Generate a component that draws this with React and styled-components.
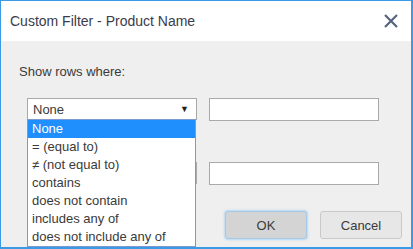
import React from 'react'
import styled, { createGlobalStyle } from 'styled-components'

const Global = createGlobalStyle`
  html, body { margin:0; padding:0; background:#ffffff; }
  body { font-family:"Liberation Sans", Arial, sans-serif; }
`
const Dialog = styled.div`
  width:413px;
  height:249px;
  box-sizing:border-box;
  border-style:solid;
  border-color:#3a9ae6;
  border-width:1px 2px 2px 1px;
  background:#efefef;
  display:flex;
  flex-direction:column;
  color:#3a3a3a;
`
const Header = styled.div`
  height:39px;
  background:#ffffff;
  display:flex;
  align-items:center;
  justify-content:space-between;
  padding:0 12px 1px 9px;
`
const Title = styled.div`
  font-size:14px;
  color:#3b3b4a;
`
const Close = styled.div`
  width:16px;
  height:16px;
  display:flex;
  svg { display:block; }
`
const Body = styled.div`
  flex:1;
  position:relative;
  padding:23px 0 0 18px;
`
const Label = styled.div`
  font-size:13px;
  line-height:16px;
`
const Row = styled.div`
  display:flex;
  align-items:flex-start;
  gap:12px;
  margin:${p => p.top}px 0 0 8px;
`
const Select = styled.div`
  position:relative;
  width:170px;
  height:22px;
  box-sizing:border-box;
  border:1px solid #a9a9a9;
  background:#ffffff;
  font-size:13px;
  display:flex;
  align-items:center;
  padding:0 0 0 5px;
`
const Arrow = styled.span`
  position:absolute;
  right:7px;
  top:5px;
  font-size:9px;
  color:#222;
`
const Input = styled.div`
  width:170px;
  height:23px;
  box-sizing:border-box;
  border:1px solid #a9a9a9;
  background:#ffffff;
`
const List = styled.ul`
  position:absolute;
  left:-1px;
  top:20px;
  width:169px;
  margin:0;
  padding:0;
  list-style:none;
  box-sizing:border-box;
  border:1px solid #7d9ad0;
  background:#ffffff;
  z-index:2;
`
const Item = styled.li`
  height:18px;
  line-height:18px;
  padding-left:4px;
  font-size:13px;
  color:${p => p.active ? '#ffffff' : '#3a3a3a'};
  background:${p => p.active ? '#1e8ffd' : 'transparent'};
`
const Footer = styled.div`
  display:flex;
  justify-content:flex-end;
  gap:13px;
  padding:26px 9px 0 0;
`
const Button = styled.button`
  width:82px;
  height:28px;
  border-radius:3px;
  font-family:inherit;
  font-size:13px;
  color:#3a3a3a;
  border:1px solid ${p => p.primary ? '#a7c9e6' : '#c9c9c9'};
  background:${p => p.primary ? '#d4d4d4' : '#e7e7e7'};
  box-shadow:${p => p.primary ? '0 0 2px 1px #b9d9f3' : 'none'};
`

const options = [
  'None',
  '= (equal to)',
  '\u2260 (not equal to)',
  'contains',
  'does not contain',
  'includes any of',
  'does not include any of',
]

export default function App() {
  return (
    <>
      <Global />
      <Dialog>
        <Header>
          <Title>Custom Filter - Product Name</Title>
          <Close>
            <svg width="16" height="16" viewBox="0 0 16 16">
              <path d="M2 2 L14 14 M14 2 L2 14" stroke="#56647f" strokeWidth="2.2" strokeLinecap="butt" />
            </svg>
          </Close>
        </Header>
        <Body>
          <Label>Show rows where:</Label>
          <Row top={18}>
            <Select>
              None
              <Arrow>▼</Arrow>
              <List>
                {options.map((o, i) => <Item key={o} active={i === 0}>{o}</Item>)}
              </List>
            </Select>
            <Input />
          </Row>
          <Row top={41}>
            <Select />
            <Input />
          </Row>
          <Footer>
            <Button primary>OK</Button>
            <Button>Cancel</Button>
          </Footer>
        </Body>
      </Dialog>
    </>
  )
}
